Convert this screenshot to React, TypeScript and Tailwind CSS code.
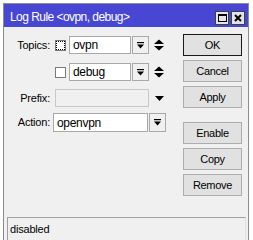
import React from "react";

const font = { fontFamily: '"Liberation Sans", Arial, sans-serif' };

function DropIcon() {
  return (
    <svg width="7" height="7" viewBox="0 0 7 7">
      <rect x="0" y="0" width="7" height="1.2" fill="#000" />
      <polygon points="0,2.5 7,2.5 3.5,6.5" fill="#000" />
    </svg>
  );
}

function UpDown() {
  return (
    <svg width="10" height="12" viewBox="0 0 10 12">
      <polygon points="5,0.5 10,5 0,5" fill="#000" />
      <polygon points="0,7 10,7 5,11.5" fill="#000" />
    </svg>
  );
}

function DropBtn() {
  return (
    <div className="w-[17px] h-[18px] border border-[#a9a9a9] bg-[#f0f0f0] flex items-center justify-center">
      <DropIcon />
    </div>
  );
}

function Btn({ label, def }: { label: string; def?: boolean }) {
  return (
    <div
      className={
        "w-[59px] h-[22px] flex items-center justify-center text-[11px] tracking-[-0.3px] text-black bg-[#e1e1e1] border " +
        (def ? "border-[#1a1a1a]" : "border-[#adadad]")
      }
    >
      {label}
    </div>
  );
}

export default function App() {
  return (
    <div className="relative w-[253px] h-[240px] bg-white overflow-hidden" style={font}>
      <div className="absolute left-[3px] top-[3px] w-[246px] h-[250px] border border-[#8c8c8c] bg-[#f0f0f0] flex flex-col">
        {/* title bar */}
        <div className="h-[23px] bg-[#4747d3] flex items-start pl-[6px] pr-[3px] shrink-0">
          <div className="text-white text-[12px] tracking-[-0.55px] mt-[4px] flex-1">Log Rule &lt;ovpn, debug&gt;</div>
          <div className="flex gap-[2px] mt-[7px]">
            <div className="w-[14px] h-[14px] bg-[#e4e4e4] border border-[#404040] flex items-center justify-center">
              <div className="w-[9px] h-[8px] border border-black border-t-2" />
            </div>
            <div className="w-[14px] h-[14px] bg-[#e4e4e4] border border-[#404040] flex items-center justify-center">
              <svg width="8" height="8" viewBox="0 0 8 8">
                <path d="M1 1 L7 7 M7 1 L1 7" stroke="#000" strokeWidth="2" />
              </svg>
            </div>
          </div>
        </div>
        {/* body */}
        <div className="flex flex-1">
          {/* form */}
          <div className="w-[178px] flex flex-col text-[11px] text-black">
            <div className="flex items-center h-[18px] mt-[9px]">
              <div className="w-[46px] text-right tracking-[-0.2px]">Topics:</div>
              <div className="w-[11px] h-[11px] ml-[5px] border border-[#7a7a7a] bg-white flex items-center justify-center">
                <div className="w-[9px] h-[9px] border border-dotted border-black" />
              </div>
              <div className="w-[62px] h-[18px] ml-[3px] border border-[#a9a9a9] bg-white flex items-center pl-[3px] text-[12px] tracking-[-0.3px]">ovpn</div>
              <div className="ml-[1px]"><DropBtn /></div>
              <div className="ml-[5px] flex items-center"><UpDown /></div>
            </div>
            <div className="flex items-center h-[18px] mt-[9px]">
              <div className="w-[46px]" />
              <div className="w-[11px] h-[11px] ml-[5px] border border-[#7a7a7a] bg-white" />
              <div className="w-[62px] h-[18px] ml-[3px] border border-[#a9a9a9] bg-white flex items-center pl-[3px] text-[12px] tracking-[-0.3px]">debug</div>
              <div className="ml-[1px]"><DropBtn /></div>
              <div className="ml-[5px] flex items-center"><UpDown /></div>
            </div>
            <div className="flex items-center h-[18px] mt-[8px]">
              <div className="w-[46px] text-right tracking-[-0.2px]">Prefix:</div>
              <div className="w-[94px] h-[18px] ml-[5px] border border-[#c8c8c8] bg-[#f0f0f0]" />
              <div className="ml-[6px] flex items-center">
                <svg width="9" height="5" viewBox="0 0 9 5">
                  <polygon points="0,0 9,0 4.5,5" fill="#000" />
                </svg>
              </div>
            </div>
            <div className="flex items-center h-[19px] mt-[6px]">
              <div className="w-[46px] text-right tracking-[-0.2px]">Action:</div>
              <div className="w-[95px] h-[19px] ml-[3px] border border-[#a9a9a9] bg-white flex items-center pl-[3px] text-[12px] tracking-[-0.3px]">openvpn</div>
              <div className="ml-[1px] w-[17px] h-[19px] border border-[#a9a9a9] bg-[#f0f0f0] flex items-center justify-center">
                <DropIcon />
              </div>
            </div>
          </div>
          {/* buttons */}
          <div className="flex flex-col ml-[1px] mt-[7px] gap-[4px]">
            <Btn label="OK" def />
            <Btn label="Cancel" />
            <Btn label="Apply" />
            <div className="h-[6px]" />
            <Btn label="Enable" />
            <Btn label="Copy" />
            <Btn label="Remove" />
          </div>
        </div>
        {/* status bar */}
        <div className="absolute left-[3px] top-[213px] w-[239px] h-[24px] border-t border-l border-[#a0a0a0] border-b border-r border-b-[#e0e0e0] border-r-[#e0e0e0] flex items-center pl-[2px] text-[11px] tracking-[-0.2px] text-black">
          disabled
        </div>
      </div>
    </div>
  );
}
